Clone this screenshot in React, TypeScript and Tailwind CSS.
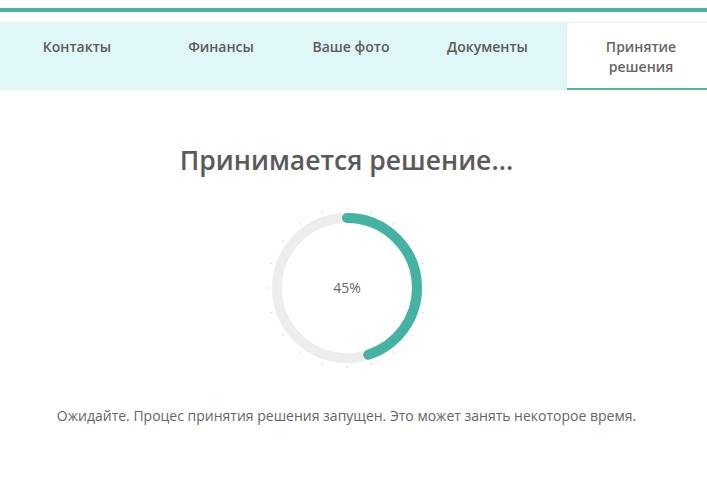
import React from "react";

const tabs = [
  { label: "Контакты", w: "w-[154px]" },
  { label: "Финансы", w: "w-[134px]" },
  { label: "Ваше фото", w: "w-[126px]" },
  { label: "Документы", w: "w-[153px] pr-[6px]" },
];

function Progress({ value }: { value: number }) {
  const cx = 80;
  const cy = 80;
  const r = 70;
  const c = 2 * Math.PI * r;
  const ticks = Array.from({ length: 20 }, (_, i) => i * 18);
  return (
    <svg width="160" height="160" viewBox="0 0 160 160">
      {ticks.map((a) => {
        const rad = (a * Math.PI) / 180;
        const major = a % 90 === 0;
        const r1 = 78;
        const r2 = major ? 84 : 81;
        return (
          <line
            key={a}
            x1={cx + r1 * Math.sin(rad)}
            y1={cy - r1 * Math.cos(rad)}
            x2={cx + r2 * Math.sin(rad)}
            y2={cy - r2 * Math.cos(rad)}
            stroke="#dcdcdc"
            strokeWidth="1"
          />
        );
      })}
      <circle cx={cx} cy={cy} r={r} fill="none" stroke="#ededed" strokeWidth="10" />
      <circle
        cx={cx}
        cy={cy}
        r={r}
        fill="none"
        stroke="#45b3a3"
        strokeWidth="10"
        strokeLinecap="round"
        strokeDasharray={`${(c * value) / 100} ${c}`}
        transform={`rotate(-90 ${cx} ${cy})`}
      />
      <text
        x={cx}
        y={cy + 5}
        textAnchor="middle"
        fontSize="14"
        fill="#666"
        fontFamily="'Open Sans', sans-serif"
      >
        {value}%
      </text>
    </svg>
  );
}

export default function App() {
  return (
    <div className="w-[707px] h-[479px] bg-white font-['Open_Sans',sans-serif] overflow-hidden">
      <div className="pt-2">
        <div className="h-1 bg-[#4bb3a4]" />
      </div>
      <div className="mt-[10px] flex border-t border-[#eaf2f2] bg-[#dff7f7] h-[68px]">
        {tabs.map((t) => (
          <div
            key={t.label}
            className={`${t.w} pt-[14px] text-center text-[14px] leading-[20px] font-semibold text-[#5b5b5b]`}
          >
            {t.label}
          </div>
        ))}
        <div className="flex-1 bg-white border-b-2 border-[#4bb3a4] pt-[14px] pl-[8px] text-center text-[14px] leading-[20px] font-semibold text-[#666]">
          Принятие
          <br />
          решения
        </div>
      </div>
      <div className="flex flex-col items-center pr-[14px]">
        <h1 className="mt-[52px] text-[26.5px] leading-[36px] font-semibold text-[#5a5a5a]">
          Принимается решение...
        </h1>
        <div className="mt-[30px]">
          <Progress value={45} />
        </div>
        <p className="mt-[38px] text-[14px] leading-[20px] text-[#666]">
          Ожидайте. Процес принятия решения запущен. Это может занять некоторое время.
        </p>
      </div>
    </div>
  );
}
